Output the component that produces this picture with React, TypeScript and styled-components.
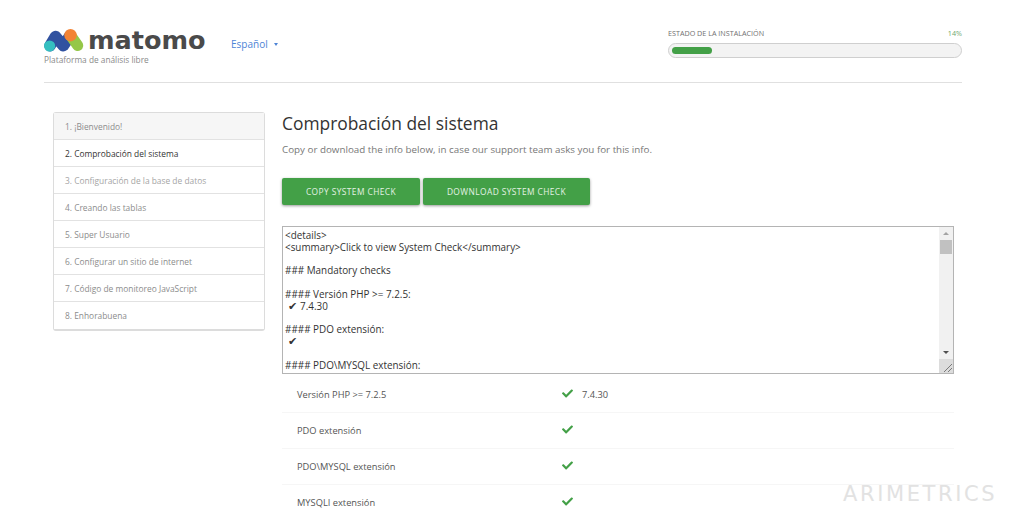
import styled, { createGlobalStyle } from 'styled-components';
import { FaCheck } from 'react-icons/fa';

const GlobalStyle = createGlobalStyle`
    html, body {
        margin: 0;
        padding: 0;
        background: #fff;
        font-family: "Open Sans", "Noto Sans", sans-serif;
    }
`;

const Page = styled.div`
    position: relative;
    height: 519px;
    overflow: hidden;
    padding: 0 62px 0 44px;
`;

const Header = styled.header`
    display: flex;
    justify-content: space-between;
    height: 82px;
    border-bottom: 1px solid #e0e0e0;
`;

const Brand = styled.div`
    display: flex;
    align-items: flex-start;
    padding-top: 27px;
`;

const LogoBlock = styled.div`
    display: flex;
    flex-direction: column;
    width: 187px;
`;

const LogoRow = styled.div`
    display: flex;
    align-items: center;
    gap: 4px;
    height: 26px;
`;

const Wordmark = styled.span`
    font-family: "DejaVu Sans", sans-serif;
    font-size: 25.5px;
    font-weight: 700;
    line-height: 26px;
    color: #4a4a4a;
`;

const Tagline = styled.div`
    font-size: 8.3px;
    line-height: 12px;
    color: #8a8a8a;
    margin-top: 1px;
`;

const Language = styled.div`
    display: flex;
    align-items: center;
    gap: 6px;
    font-size: 10px;
    line-height: 14px;
    color: #4d84d6;
    margin-top: 10px;
`;

const Caret = styled.span`
    width: 0;
    height: 0;
    border-left: 2.5px solid transparent;
    border-right: 2.5px solid transparent;
    border-top: 3px solid #4d84d6;
`;

const Progress = styled.div`
    width: 294px;
    padding-top: 28px;
`;

const ProgressLabels = styled.div`
    display: flex;
    justify-content: space-between;
    font-size: 7.2px;
    line-height: 10px;
    color: #707070;
    margin-bottom: 5px;
`;

const Percent = styled.span`
    color: #6fa76f;
`;

const ProgressTrack = styled.div`
    height: 15px;
    box-sizing: border-box;
    padding: 3px;
    background: #f3f3f3;
    border: 1px solid #cfcfcf;
    border-radius: 8px;
`;

const ProgressFill = styled.div`
    height: 100%;
    background: #43a047;
    border-radius: 4px;
`;

const Body = styled.div`
    display: flex;
    align-items: flex-start;
    gap: 17px;
    padding: 29px 8px 0 9px;
`;

const Steps = styled.ol`
    flex: none;
    width: 212px;
    box-sizing: border-box;
    margin: 0;
    padding: 0;
    list-style: none;
    border: 1px solid #dcdcdc;
    border-bottom-width: 2px;
    border-radius: 3px;
`;

const Step = styled.li<{ $state: 'done' | 'active' | 'todo' | 'next' }>`
    height: 27px;
    box-sizing: border-box;
    padding-left: 11px;
    font-size: 8.4px;
    line-height: 27px;
    background: ${p => (p.$state === 'done' ? '#f6f6f6' : '#fff')};
    color: ${p => (p.$state === 'active' ? '#333' : p.$state === 'next' ? '#a5a5a5' : '#8c8c8c')};
    border-bottom: 1px solid #e2e2e2;

    &:last-child {
        border-bottom: 0;
    }
`;

const Main = styled.main`
    flex: 1;
    min-width: 0;
`;

const Title = styled.h2`
    margin: 0;
    font-size: 17.4px;
    font-weight: 400;
    line-height: 22px;
    color: #333;
`;

const Intro = styled.p`
    margin: 8px 0 0;
    font-size: 9.8px;
    line-height: 16px;
    color: #777;
`;

const Buttons = styled.div`
    display: flex;
    gap: 3px;
    margin-top: 20px;
`;

const Button = styled.button<{ $width: number }>`
    width: ${p => p.$width}px;
    height: 27px;
    padding: 0;
    border: 0;
    border-radius: 2px;
    background: #43a047;
    color: #e4f2e4;
    font-family: inherit;
    font-size: 8.4px;
    letter-spacing: 0.42px;
    text-transform: uppercase;
    box-shadow: 0 1px 3px rgba(0, 0, 0, 0.4);
`;

const CheckBox = styled.div`
    display: flex;
    height: 148px;
    box-sizing: border-box;
    margin-top: 21px;
    border: 1px solid #b4b4b4;
    overflow: hidden;
`;

const CheckText = styled.div`
    flex: 1;
    padding: 3px 2px 0;
    font-size: 9.9px;
    color: #333;
`;

const CheckLine = styled.div`
    display: flex;
    gap: 3px;
    height: 11.8px;
    line-height: 11.8px;
    white-space: pre;
`;

const Tick = styled.span`
    margin-left: 3px;
    font-size: 10.5px;
`;

const Scrollbar = styled.div`
    flex: none;
    width: 14px;
    display: flex;
    flex-direction: column;
    align-items: center;
    background: #f1f1f1;
`;

const ArrowUp = styled.span`
    width: 0;
    height: 0;
    margin-top: 5px;
    border-left: 3px solid transparent;
    border-right: 3px solid transparent;
    border-bottom: 3px solid #a3a3a3;
`;

const Thumb = styled.div`
    width: 12px;
    height: 14px;
    margin-top: 5px;
    background: #c1c1c1;
`;

const ArrowDown = styled.span`
    width: 0;
    height: 0;
    margin-top: auto;
    margin-bottom: 5px;
    border-left: 3px solid transparent;
    border-right: 3px solid transparent;
    border-top: 3px solid #505050;
`;

const Resizer = styled.div`
    width: 14px;
    height: 14px;
    background: #dcdcdc;
    display: flex;
`;

const Rows = styled.div`
    margin-top: 3px;
`;

const Row = styled.div`
    display: flex;
    align-items: center;
    height: 36px;
    box-sizing: border-box;
    border-bottom: 1px solid #f6f6f6;
    font-size: 9.3px;
    color: #555;
`;

const RowLabel = styled.div`
    width: 265px;
    padding-left: 15px;
`;

const RowCheck = styled.div`
    display: flex;
    align-items: center;
    gap: 9px;
    color: #43a047;

    svg {
        margin-bottom: 2px;
    }
`;

const RowValue = styled.span`
    color: #555;
`;

const Watermark = styled.div`
    position: absolute;
    left: 843px;
    top: 481px;
    font-family: "DejaVu Sans", sans-serif;
    font-size: 21px;
    font-weight: 400;
    line-height: 26px;
    letter-spacing: 2.6px;
    color: #e2e2e2;
`;

const steps = [
    { label: '1. ¡Bienvenido!', state: 'done' },
    { label: '2. Comprobación del sistema', state: 'active' },
    { label: '3. Configuración de la base de datos', state: 'next' },
    { label: '4. Creando las tablas', state: 'todo' },
    { label: '5. Super Usuario', state: 'todo' },
    { label: '6. Configurar un sitio de internet', state: 'todo' },
    { label: '7. Código de monitoreo JavaScript', state: 'todo' },
    { label: '8. Enhorabuena', state: 'todo' },
] as const;

const checks = [
    { label: 'Versión PHP >= 7.2.5', value: '7.4.30' },
    { label: 'PDO extensión' },
    { label: 'PDO\\MYSQL extensión' },
    { label: 'MYSQLI extensión' },
];

const MatomoLogo = () => (
    <svg width="40" height="23" viewBox="0 0 40 23">
        <path d="M6 16.7 L11.5 7.5 L19.3 16.7 L26 6.7" stroke="#3152a0" strokeWidth="11.5" strokeLinecap="round" strokeLinejoin="round" fill="none" />
        <path d="M33.7 16.5 L27 7" stroke="#95c748" strokeWidth="11" strokeLinecap="round" fill="none" />
        <circle cx="5.6" cy="17" r="5.6" fill="#35bfc0" />
        <circle cx="26.5" cy="6.2" r="6.2" fill="#f38334" />
    </svg>
);

const ResizeGrip = () => (
    <svg width="14" height="14" viewBox="0 0 14 14">
        <path d="M5 13 L13 5 M9 13 L13 9" stroke="#7a7a7a" strokeWidth="1" fill="none" />
    </svg>
);

export default function App() {
    return (
        <Page>
            <GlobalStyle />
            <Header>
                <Brand>
                    <LogoBlock>
                        <LogoRow>
                            <MatomoLogo />
                            <Wordmark>matomo</Wordmark>
                        </LogoRow>
                        <Tagline>Plataforma de análisis libre</Tagline>
                    </LogoBlock>
                    <Language>
                        Español <Caret />
                    </Language>
                </Brand>
                <Progress>
                    <ProgressLabels>
                        <span>ESTADO DE LA INSTALACIÓN</span>
                        <Percent>14%</Percent>
                    </ProgressLabels>
                    <ProgressTrack>
                        <ProgressFill style={{ width: '14%' }} />
                    </ProgressTrack>
                </Progress>
            </Header>
            <Body>
                <Steps>
                    {steps.map(step => (
                        <Step key={step.label} $state={step.state}>{step.label}</Step>
                    ))}
                </Steps>
                <Main>
                    <Title>Comprobación del sistema</Title>
                    <Intro>Copy or download the info below, in case our support team asks you for this info.</Intro>
                    <Buttons>
                        <Button $width={138}>Copy system check</Button>
                        <Button $width={167}>Download system check</Button>
                    </Buttons>
                    <CheckBox>
                        <CheckText>
                            <CheckLine>{'<details>'}</CheckLine>
                            <CheckLine>{'<summary>Click to view System Check</summary>'}</CheckLine>
                            <CheckLine />
                            <CheckLine>### Mandatory checks</CheckLine>
                            <CheckLine />
                            <CheckLine>{'#### Versión PHP >= 7.2.5:'}</CheckLine>
                            <CheckLine><Tick>✔</Tick><span>7.4.30</span></CheckLine>
                            <CheckLine />
                            <CheckLine>#### PDO extensión:</CheckLine>
                            <CheckLine><Tick>✔</Tick></CheckLine>
                            <CheckLine />
                            <CheckLine>#### PDO\MYSQL extensión:</CheckLine>
                        </CheckText>
                        <Scrollbar>
                            <ArrowUp />
                            <Thumb />
                            <ArrowDown />
                            <Resizer><ResizeGrip /></Resizer>
                        </Scrollbar>
                    </CheckBox>
                    <Rows>
                        {checks.map(check => (
                            <Row key={check.label}>
                                <RowLabel>{check.label}</RowLabel>
                                <RowCheck>
                                    <FaCheck size={11} />
                                    {check.value && <RowValue>{check.value}</RowValue>}
                                </RowCheck>
                            </Row>
                        ))}
                    </Rows>
                </Main>
            </Body>
            <Watermark>ARIMETRICS</Watermark>
        </Page>
    );
}
